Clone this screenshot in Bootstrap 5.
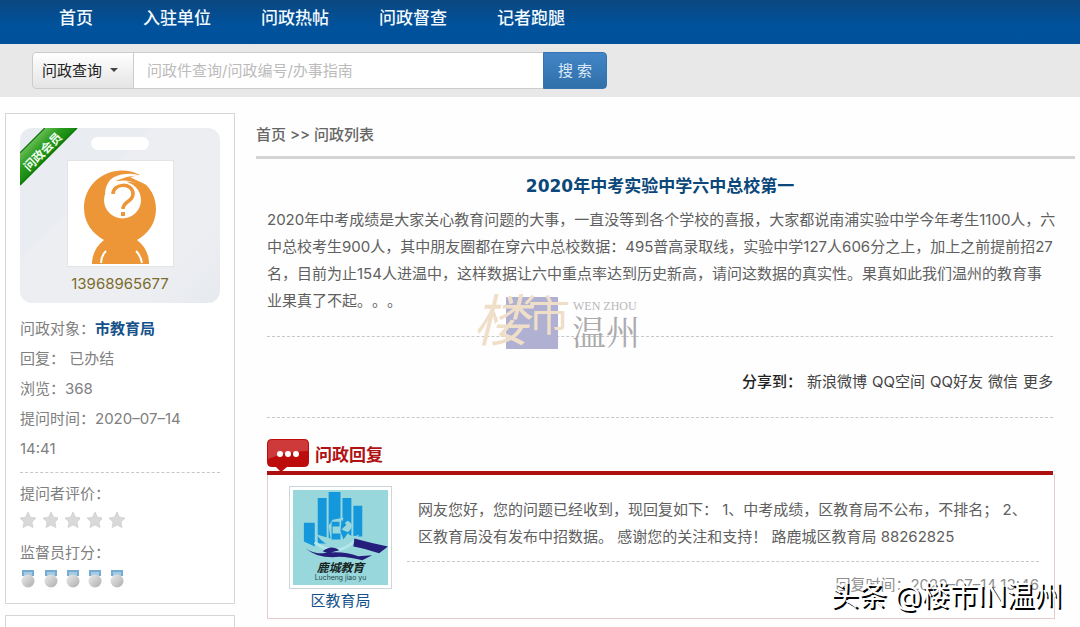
<!DOCTYPE html>
<html lang="zh-CN">
<head>
<meta charset="utf-8">
<meta name="viewport" content="width=device-width, initial-scale=1">
<title>2020年中考实验中学六中总校第一</title>
<link href="https://cdn.jsdelivr.net/npm/bootstrap@5.3.0/dist/css/bootstrap.min.css" rel="stylesheet">
<style>
body{font-family:Inter,"Noto Sans CJK SC",sans-serif;font-size:15px;line-height:27px;color:#555;background:#fefefe;text-spacing-trim:space-all;font-feature-settings:"chws" 0,"halt" 0}
a{text-decoration:none}
.topnav{background:linear-gradient(#0a4780,#00529c 60%,#00519a);height:44px;padding-left:59px}
.topnav .nav{gap:50px}
.topnav .nav-link{padding:0;color:#f2f9ff;font-size:17px;font-weight:500;line-height:36px}
.searchbar{background:#e8e8e8;padding:8px 32px}
.searchbar .input-group{max-width:575px;height:37px}
.searchbar .btn,.searchbar .form-control{font-size:15px;line-height:23px;border-color:#ccc}
.searchbar .btn-query{background:linear-gradient(#fff,#e4e4e4);color:#222;width:102px;padding:6px 9px;border-radius:4px}
.btn-query::after{margin-left:8px;color:#444}
.searchbar .form-control{padding:6px 13px}
.form-control::placeholder{color:#bbb}
.searchbar .btn-search{background:linear-gradient(#4285c6,#3070aa);color:#dbe9f5;border-color:#3474b0;width:64px;padding:6px;border-radius:4px}
.page-body{padding:16px 5px 0 5px;gap:21px}
.side{width:230px;gap:11px}
.panel{border:1px solid #d6d6d6;background:#fff}
.info{padding:14px 14px 6px;line-height:30px;color:#808080}
.member{height:175px;border-radius:12px;background:linear-gradient(135deg,#e9ecf0 0 35%,#eceef2 35% 78%,#e6e9ed);overflow:hidden;margin-bottom:11px}
.slot{width:58px;height:13px;border-radius:7px;background:#fff;margin-top:9px}
.avatar{width:107px;height:107px;border:1px solid #e3e3e3;background:#fff;margin-top:10px}
.phone{color:#7b6c2c;line-height:34px}
.ribbon{left:0;top:0}
.rule-dash{border-top:1px dashed #c8c8c8}
.rating{margin-top:8px;padding-top:6px}
.blue{color:#15518a}
.icons{height:22px;gap:7px;margin-bottom:7px}
.crumbs{line-height:43px;border-bottom:3px solid #d4d4d4;font-weight:500;color:#666}
.crumbs a{color:#666}
.article{padding:0 22px 0 11px}
.headline{font:bold 17px/28px "DejaVu Sans","Noto Sans CJK SC",sans-serif;color:#0b477a;margin:13px 0 6px}
.article-text{padding-bottom:22px;color:#606060;margin-right:-6px}
.stamp{left:213px;bottom:-14px;width:180px;height:66px;overflow:visible}
.share{padding:31px 0 21px;line-height:28px;color:#444}
.share a{color:#444;margin-left:5px}
.share strong{font-weight:500;color:#222}
.reply-head{padding-top:21px;border-bottom:4px solid #ad1010}
.reply-head h2{font-size:17px;font-weight:700;line-height:32px;color:#b01313;margin:0 0 0 6px}
.bubble{margin-bottom:-2px}
.reply{border:1px solid #e2cccc;border-top:0;background:#fff;padding:11px 15px 6px 21px;gap:15px;margin-right:-2px}
.unit a{line-height:23px}
.unit-pic{border:1px solid #ccd5d9;padding:3px;background:#fff}
.reply-text{padding:10px 0 11px 11px;color:#606060}
.reply-time{padding-top:9px;color:#909090}
.credit{right:18px;bottom:14px;font-size:28px;line-height:34px;color:#fff;text-shadow:2px 2px 0 #000}
</style>
</head>
<body>
<div class="d-flex flex-column vh-100 overflow-hidden position-relative">
<header>
<nav class="topnav"><ul class="nav flex-nowrap text-nowrap">
<li><a class="nav-link" href="#">首页</a></li><li><a class="nav-link" href="#">入驻单位</a></li><li><a class="nav-link" href="#">问政热帖</a></li><li><a class="nav-link" href="#">问政督查</a></li><li><a class="nav-link" href="#">记者跑腿</a></li>
</ul></nav>
<form class="searchbar"><div class="input-group flex-nowrap">
<button class="btn btn-query dropdown-toggle text-start text-nowrap" type="button">问政查询</button>
<input class="form-control" type="text" aria-label="搜索内容" placeholder="问政件查询/问政编号/办事指南">
<button class="btn btn-search" type="submit">搜 索</button>
</div></form>
</header>
<div class="page-body d-flex flex-grow-1">
<aside class="side d-flex flex-column flex-shrink-0">
<section class="panel info">
<div class="member d-flex flex-column align-items-center position-relative">
<svg class="ribbon position-absolute" width="58" height="58" viewBox="0 0 58 58"><defs><linearGradient id="green" x1="0" y1="0" x2="1" y2="1"><stop offset="0.22" stop-color="#69bd52"/><stop offset="0.36" stop-color="#2c9c20"/><stop offset="0.5" stop-color="#17880e"/></linearGradient></defs><path d="M26 0H57L0 57V26Z" fill="url(#green)"/><path d="M25 0L0 25M57 0L0 57" stroke="#0d790a" stroke-width="1.5"/><text transform="translate(23 24) rotate(-45)" text-anchor="middle" y="4" font-size="12" font-weight="700" fill="#effff0">问政会员</text></svg>
<div class="slot"></div>
<div class="avatar"><svg class="d-block" width="105" height="105" viewBox="0 0 105 105"><g fill="#ec9637"><path d="M72 14C47 1 16 18 16 47C16 62 25 73 36 79C28 85 24 94 24 103H81C81 93 77 85 69 79C80 73 88 62 88 48C88 38 84 30 78 24L62 16Z"/></g><circle cx="54.500" cy="39" r="18.500" fill="#fff"/><path d="M37 33Q38 14 58 13Q66 12 73 15Q60 14 49 20Q66 16 76 24Q58 17 44 25Z" fill="#fff"/><path d="M47 20Q61 14 78 24Q84 30 86 38Q72 16 47 20Z" fill="#ec9637"/><path d="M33 102Q33 95 38 90M74 102Q73 95 68 90" fill="none" stroke="#fff" stroke-width="2"/><path d="M45 33C45 22 65 21 65 33C65 41 55 40 55 48" fill="none" stroke="#ec9637" stroke-width="3.500"/><path d="M53 51h4v4h-4z" fill="#ec9637"/></svg></div>
<div class="phone">13968965677</div>
</div>
<div>问政对象：<a class="blue fw-bold" href="#">市教育局</a></div>
<div>回复：&nbsp;已办结</div>
<div>浏览：368</div>
<div>提问时间：2020–07–14 14:41</div>
<div class="rule-dash rating">提问者评价：</div>
<svg class="position-absolute" width="0" height="0"><defs><linearGradient id="silver" x1="0" y1="0" x2="1" y2="1"><stop stop-color="#ececec"/><stop offset="1" stop-color="#adadad"/></linearGradient>
<path id="star" d="M8 0L10.400 5.200L16 6L12 10L13 15.500L8 13L3 15.500L4 10L0 6L5.600 5.200Z" fill="#d9d9d9" stroke="#c6c6c6" stroke-width=".6"/>
<g id="medal"><path d="M2 0H14V6H2Z" fill="#76acd2"/><path d="M4 2H12V6H4Z" fill="#a4c9e2"/><circle cx="8" cy="11" r="6.500" fill="url(#silver)"/></g></defs></svg>
<div class="icons d-flex align-items-center">
<svg width="16" height="16"><use href="#star"/></svg><svg width="15" height="16"><use href="#star"/></svg><svg width="15" height="16"><use href="#star"/></svg><svg width="15" height="16"><use href="#star"/></svg><svg width="16" height="16"><use href="#star"/></svg></div>
<div>监督员打分：</div>
<div class="icons d-flex align-items-center">
<svg width="16" height="18"><use href="#medal"/></svg><svg width="15" height="18"><use href="#medal"/></svg><svg width="15" height="18"><use href="#medal"/></svg><svg width="15" height="18"><use href="#medal"/></svg><svg width="16" height="18"><use href="#medal"/></svg></div>
</section>
<section class="panel border-bottom-0 flex-grow-1"></section>
</aside>
<main class="flex-grow-1">
<div class="crumbs"><a href="#">首页</a> &gt;&gt; <a href="#">问政列表</a></div>
<article class="article">
<h1 class="headline text-center">2020年中考实验中学六中总校第一</h1>
<div class="article-text position-relative">2020年中考成绩是大家关心教育问题的大事，一直没等到各个学校的喜报，大家都说南浦实验中学今年考生1100人，六中总校考生900人，其中朋友圈都在穿六中总校数据：495普高录取线，实验中学127人606分之上，加上之前提前招27名，目前为止154人进温中，这样数据让六中重点率达到历史新高，请问这数据的真实性。果真如此我们温州的教育事<br>业果真了不起。。。
<svg class="stamp position-absolute" viewBox="0 0 180 66"><path d="M26 13H78V65H26Z" fill="#afb0d2"/><g font-family="Noto Sans CJK SC,sans-serif" fill="#f0dfc8"><text x="-7" y="57" font-size="56" font-style="italic">楼</text><text x="48" y="47" font-size="42">市</text></g><text x="93" y="26" font-family="Liberation Serif,serif" font-size="12" fill="#b7b7b9">WEN ZHOU</text><text x="92" y="61" font-family="Noto Serif CJK SC,Noto Sans CJK SC,serif" font-size="34" fill="#ababad">温州</text></svg>
</div>
<div class="rule-dash share text-end"><strong>分享到：</strong><a href="#">新浪微博</a><a href="#">QQ空间</a><a href="#">QQ好友</a><a href="#">微信</a><a href="#">更多</a></div>
<section class="rule-dash">
<div class="reply-head d-flex">
<svg class="bubble" width="42" height="34" viewBox="0 0 42 34"><path d="M5 0H37Q42 0 42 5V23Q42 28 37 28H20L14 33L9 28H5Q0 28 0 23V5Q0 0 5 0Z" fill="#bd0c0c"/><path d="M5 1H37Q41 1 41 5V12Q22 12 1 20V5Q1 1 5 1Z" fill="#ce3939"/><g fill="#fff"><circle cx="13" cy="15" r="3"/><circle cx="21" cy="15" r="3"/><circle cx="29" cy="15" r="3"/></g></svg>
<h2>问政回复</h2></div>
<div class="reply d-flex">
<div class="unit text-center flex-shrink-0">
<svg class="unit-pic d-block" width="103" height="103" viewBox="0 0 96 96"><path d="M0 0H96V96H0Z" fill="#98d7dc"/><path d="M11 33H22V57L11 52ZM25 8H34V54H25ZM36 2H48V54H36ZM50 8H59V50H50ZM61 16H70V47H61Z" fill="#1597dc"/><path d="M24 45Q31 57 47 57Q62 55 67 45Q59 49 55 43Q64 35 55 31L49 36L51 28L40 30L36 36L38 49Z" fill="#98d7dc"/><path d="M39 32h8v5h-7v7h8v6h-9zM49 30l5 5-5 5 7 3-5 7-3-8z" fill="#1597dc"/><path d="M22 53Q44 70 64 50" fill="none" stroke="#b5e7e9" stroke-width="3"/><path d="M62 49Q80 54 96 57L87 64Q73 59 61 57ZM30 62Q39 55 47 61L35 64ZM13 59Q20 64 30 64Q50 61 66 67L80 66L70 71Q51 66 40 68Q23 68 13 59Z" fill="#251f7b"/><text x="48" y="83" text-anchor="middle" font-size="12" font-weight="700" font-style="italic" fill="#16251f">鹿城教育</text><text x="48" y="91" text-anchor="middle" font-size="7" fill="#244a48">Lucheng jiao yu</text></svg>
<a class="blue d-block" href="#">区教育局</a></div>
<div class="flex-grow-1"><div class="reply-text">网友您好，您的问题已经收到，现回复如下： 1、中考成绩，区教育局不公布，不排名； 2、区教育局没有发布中招数据。 感谢您的关注和支持！ 路鹿城区教育局 88262825</div>
<div class="reply-time rule-dash text-end">回复时间：2020–07–14 13:46</div></div>
</div></section>
</article>
</main>
</div>
<div class="credit position-absolute text-nowrap">头条 @楼市IN温州</div>
</div>
<script src="https://cdn.jsdelivr.net/npm/bootstrap@5.3.0/dist/js/bootstrap.bundle.min.js"></script>
</body>
</html>
